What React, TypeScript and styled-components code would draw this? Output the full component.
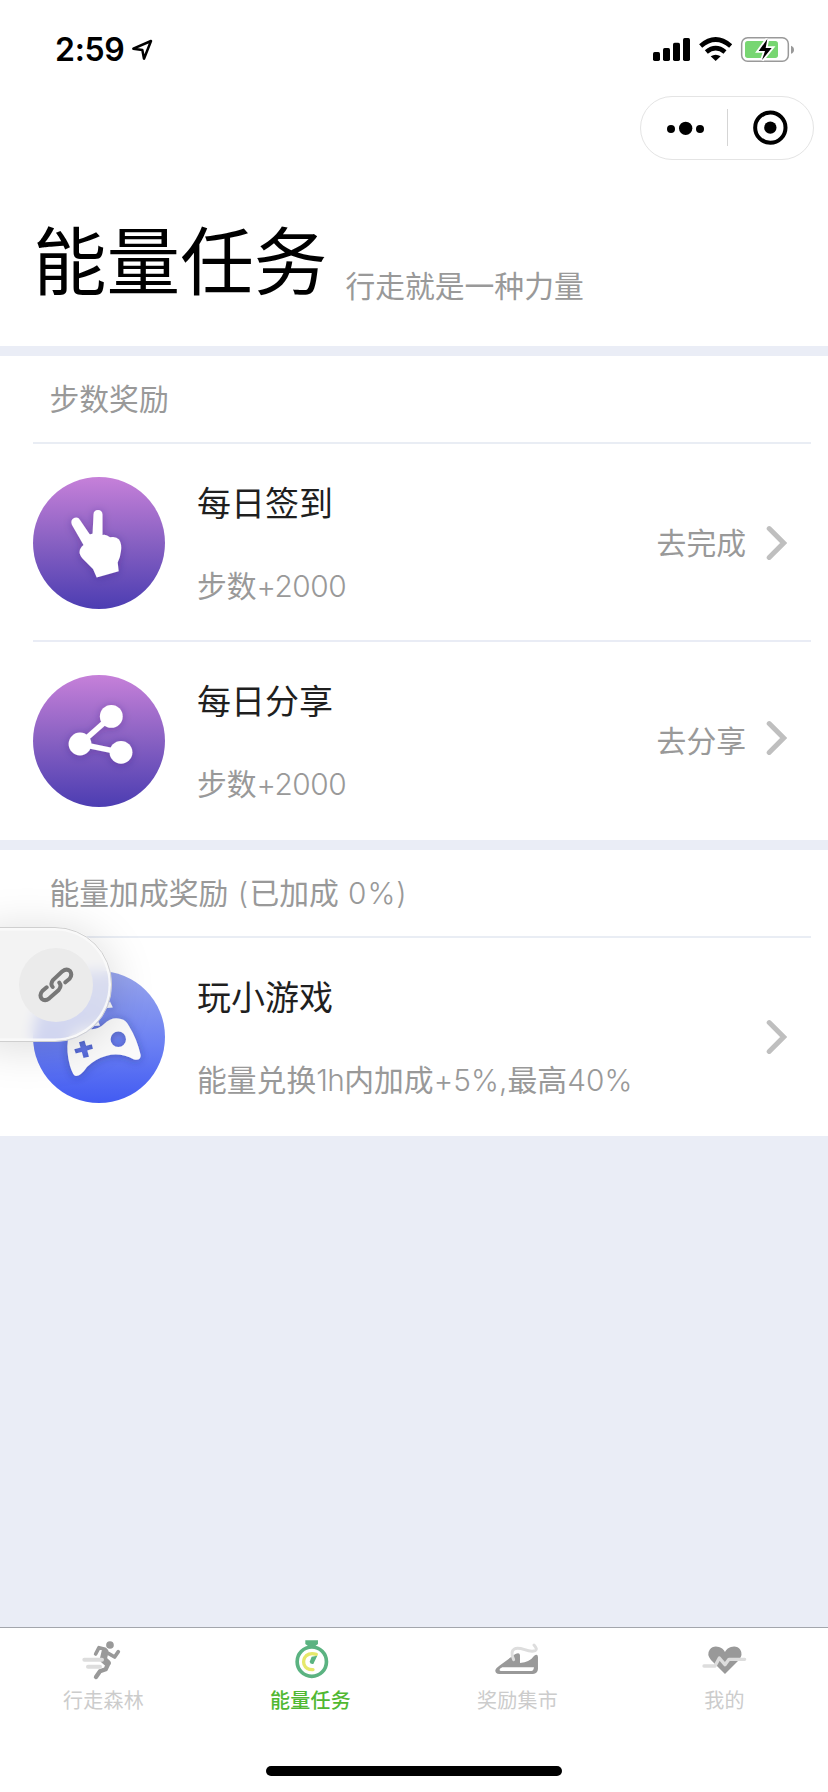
import React from "react";
import styled, { createGlobalStyle } from "styled-components";

const GlobalStyle = createGlobalStyle`
  * { box-sizing: border-box; }
  html, body { margin: 0; padding: 0; background: #eaedf6; }
  body {
    font-family: "Noto Sans CJK SC", sans-serif;
    font-weight: 400;
  }
  svg { display: block; flex: none; }
`;

const Screen = styled.div`
  position: relative;
  width: 828px;
  height: 1792px;
  display: flex;
  flex-direction: column;
  background: #eaedf6;
  overflow: hidden;
`;

const TopArea = styled.header`
  height: 346px;
  background: #fff;
  flex: none;
`;

const StatusBar = styled.div`
  height: 96px;
  padding: 0 33px 0 55px;
  display: flex;
  justify-content: space-between;
`;

const Clock = styled.div`
  display: flex;
  padding-top: 30px;
  gap: 6px;
  font: 600 32px/40px Inter, sans-serif;
  letter-spacing: -0.3px;
  color: #000;
`;

const CapsuleRow = styled.div`
  display: flex;
  justify-content: flex-end;
  padding-right: 14px;
`;

const Capsule = styled.div`
  width: 174px;
  height: 64px;
  border: 1px solid #e4e4e4;
  border-radius: 32px;
  display: flex;
`;

const Heading = styled.div`
  display: flex;
  align-items: flex-start;
  padding: 41px 33px 0 33px;
  gap: 18px;
`;

const Title = styled.h1`
  margin: 0;
  font-size: 73.6px;
  line-height: 112px;
  font-weight: 400;
  color: #000;
`;

const Slogan = styled.span`
  margin-top: 61px;
  font-size: 29.8px;
  line-height: 44px;
  color: #999;
`;

const Section = styled.section`
  margin-top: 10px;
  background: #fff;
  flex: none;
`;

const SectionHead = styled.div`
  margin-left: 33px;
  margin-right: 17px;
  padding-left: 16.5px;
  height: 88px;
  border-bottom: 2px solid #e9edf4;
  font-size: 29.8px;
  line-height: 82px;
  color: #999;
  white-space: pre;
`;

const Row = styled.div<{ $line?: boolean }>`
  margin-left: 33px;
  margin-right: 17px;
  height: 198px;
  padding: 33px 24px 0 0;
  display: flex;
  align-items: flex-start;
  border-bottom: ${(p) => (p.$line ? "2px solid #e9ecf5" : "none")};
`;

const Badge = styled.svg`
  width: 132px;
  height: 132px;
`;

const Info = styled.div`
  margin-left: 32px;
  flex: 1;
  display: flex;
  flex-direction: column;
  gap: 37px;
`;

const TaskName = styled.div`
  font-size: 34px;
  line-height: 50px;
  color: #1f1f1f;
`;

const TaskDesc = styled.div`
  font-size: 29.8px;
  line-height: 40px;
  color: #999;
  white-space: nowrap;
`;

const Latin = styled.span<{ $gap?: number }>`
  font-family: Inter, sans-serif;
  font-weight: 350;
  letter-spacing: ${(p) => p.$gap ?? -0.6}px;
`;

const Action = styled.div`
  height: 132px;
  display: flex;
  align-items: center;
  gap: 20px;
  font-size: 29.8px;
  color: #999;
`;

const ActionLabel = styled.span`
  line-height: 44px;
  padding-bottom: 5px;
`;

const Chevron = styled.svg<{ $lift?: number }>`
  width: 21px;
  height: 36px;
  margin-bottom: ${(p) => p.$lift ?? 0}px;
`;

const Floating = styled.div`
  position: absolute;
  left: -20px;
  top: 927px;
  width: 132px;
  height: 115px;
  border-radius: 0 57px 57px 0;
  border: 1px solid #cfcfcf;
  background: rgba(239, 239, 239, 0.76);
  backdrop-filter: blur(7px);
  box-shadow: 0 4px 46px rgba(0, 0, 0, 0.15), inset 0 0 0 2.5px rgba(250, 250, 250, 0.9);
  display: flex;
  align-items: center;
  padding-left: 38px;
`;

const FloatingDisc = styled.div`
  width: 74px;
  height: 74px;
  border-radius: 50%;
  background: #ebebeb;
  display: flex;
  align-items: center;
  justify-content: center;
`;

const TabBar = styled.nav`
  margin-top: auto;
  height: 165px;
  border-top: 1px solid #a3a6ac;
  background: #fff;
  display: flex;
  flex-direction: column;
  align-items: center;
`;

const Tabs = styled.div`
  display: flex;
  width: 100%;
  height: 138px;
`;

const Tab = styled.div<{ $active?: boolean }>`
  flex: 1;
  padding-top: 10px;
  display: flex;
  flex-direction: column;
  align-items: center;
  font-size: 20px;
  letter-spacing: 0.3px;
  line-height: 30px;
  font-weight: ${(p) => (p.$active ? 500 : 400)};
  color: ${(p) => (p.$active ? "#50b832" : "#ccc")};
`;

const TabIcon = styled.svg`
  width: 43.3px;
  height: 43.3px;
  margin-bottom: 4px;
`;

const HomeIndicator = styled.div`
  width: 296px;
  height: 10px;
  border-radius: 5px;
  background: #000;
`;

const StatusIcons = () => (
  <svg width="145" height="96" viewBox="150 0 435 288">
    <g fill="#000">
      <rect x="159" y="156" width="21" height="27" rx="5" />
      <rect x="189" y="144" width="21" height="39" rx="5" />
      <rect x="219" y="128" width="21" height="55" rx="5" />
      <rect x="249" y="114" width="21" height="69" rx="5" />
      <path d="M347 183 L332 169 Q347 159 362 169 Z" />
    </g>
    <g fill="none" stroke="#000" strokeWidth="14">
      <path d="M302 138 Q347 99 392 138" />
      <path d="M319 156 Q347 133 375 156" />
    </g>
    <rect x="425" y="113" width="140" height="71" rx="18" fill="#fff" stroke="#999" strokeWidth="4.5" />
    <rect x="435" y="123" width="99" height="51" rx="8" fill="#78d672" />
    <path d="M573 137 Q582 140 582 149 Q582 158 573 161 Z" fill="#999" />
    <path d="M502 117 L476 153 H495 L486 180 L515 144 H497 Z" fill="#000" stroke="#fff" strokeWidth="11" paintOrder="stroke" />
  </svg>
);

const PurpleGradient = ({ id }: { id: string }) => (
  <defs>
    <linearGradient id={id} x1="0" y1="0" x2="0" y2="1">
      <stop offset="0" stopColor="#c680d9" />
      <stop offset="0.5" stopColor="#8760c2" />
      <stop offset="1" stopColor="#4c3db2" />
    </linearGradient>
    <filter id={id + "Shadow"} x="-30%" y="-30%" width="160%" height="160%">
      <feDropShadow dx="0" dy="1" stdDeviation="4" floodColor="#30206a" floodOpacity="0.3" />
    </filter>
  </defs>
);

const SignInBadge = () => (
  <Badge viewBox="0 0 132 132">
    <PurpleGradient id="signIn" />
    <circle cx="66" cy="66" r="66" fill="url(#signIn)" />
    <g fill="#fff" filter="url(#signInShadow)">
      <path d="M60.5 37.5 Q60.7 33 65 33 Q69.2 33 69.5 37.5 V58 Q73 56.8 77 60.3 Q83 59 86 62.5 Q89 67 88 74 Q87.4 80 84.7 85.5 L85.7 94.3 L63.7 100.5 L60 92 L49.5 81.5 Q46 77 46.6 74.5 Q46.8 71 50.5 68 L39 48 Q37 43 41 41 Q45 39.5 47 43 L56.5 57 Q58 57.6 59.6 56.4 Z" />
    </g>
  </Badge>
);

const ShareBadge = () => (
  <Badge viewBox="0 0 132 132">
    <PurpleGradient id="share" />
    <circle cx="66" cy="66" r="66" fill="url(#share)" />
    <g fill="#fff" filter="url(#shareShadow)">
      <path d="M78.3 41.4 L47 69 L88 77.3" fill="none" stroke="#fff" strokeWidth="5.4" />
      <circle cx="78.3" cy="41.4" r="11.4" />
      <circle cx="47" cy="69" r="11.4" />
      <circle cx="88" cy="77.3" r="11.4" />
    </g>
  </Badge>
);

const GameBadge = () => (
  <Badge viewBox="0 0 132 132">
    <defs>
      <linearGradient id="game" x1="0" y1="0" x2="0" y2="1">
        <stop offset="0" stopColor="#99a6ed" />
        <stop offset="0.55" stopColor="#6b80f3" />
        <stop offset="1" stopColor="#425bf2" />
      </linearGradient>
      <filter id="gameShadow" x="-30%" y="-30%" width="160%" height="160%">
        <feDropShadow dx="0" dy="1" stdDeviation="4" floodColor="#203070" floodOpacity="0.4" />
      </filter>
    </defs>
    <circle cx="66" cy="66" r="66" fill="url(#game)" />
    <g filter="url(#gameShadow)">
      <path d="M72 35 L77 30.5 L79.8 36.5 L74 37 Z M59 53 L65 50 L67 54.5 L61 55 Z" fill="#fafafa" />
      <path
        d="M43 62 Q50 54 57 58 Q65 59 71 53 Q79 45 88 48 Q93 49 96 55 Q104 68 107.7 84 Q108 90 101 88.5 Q87 81 73 85 Q62 88 54 96 Q48 105 43 105 Q40 105 37 95 Q33 81 35 68 Q37 61 43 62 Z
           M45.9 71.2 L47.5 76.4 L41.2 78.2 L42.7 82.6 L48.8 80.9 L50.5 87.1 L56 85.7 L54.3 79.4 L60 77.8 L58.8 73.2 L53.1 74.8 L51.5 69.5 Z
           M93 68.3 A7.7 7.7 0 1 0 77.6 68.3 A7.7 7.7 0 1 0 93 68.3 Z"
        fill="#fafafa"
        fillRule="evenodd"
      />
    </g>
  </Badge>
);

const ChevronIcon = ({ lift }: { lift?: number }) => (
  <Chevron $lift={lift} viewBox="0 0 21 36">
    <path d="M3.2 3.6 L17.6 18 L3.2 32.4" fill="none" stroke="#bfbfbf" strokeWidth="5" strokeLinecap="round" strokeLinejoin="miter" />
  </Chevron>
);

const LinkIcon = () => (
  <svg width="36" height="36" viewBox="114 319 108 108" fill="none" stroke="#777" strokeWidth="12" strokeLinecap="round">
    <path d="M196 365 L209 354 Q218 342 210 331 Q200 322 187 332 L159 358 Q150 370 158 379" />
    <path d="M140 380 L127 391 Q117 402 125 414 Q135 423 148 413 L176 388 Q186 376 178 366" />
  </svg>
);

export default function App() {
  return (
    <Screen>
      <GlobalStyle />
      <TopArea>
        <StatusBar>
          <Clock>
            2:59
            <svg width="24" height="40" viewBox="390 90 72 120">
              <path d="M397 146 L450 123 L429 176 L424 150 Z" fill="none" stroke="#000" strokeWidth="7.5" strokeLinejoin="round" />
            </svg>
          </Clock>
          <StatusIcons />
        </StatusBar>
        <CapsuleRow>
          <Capsule>
            <svg width="172" height="62" viewBox="123 291 516 186">
              <circle cx="213" cy="387" r="12" />
              <circle cx="257" cy="385" r="20" />
              <circle cx="300" cy="387" r="12" />
              <rect x="381" y="327" width="3" height="111" fill="#d5d5d5" />
              <circle cx="511" cy="383" r="45.5" fill="none" stroke="#000" strokeWidth="12" />
              <circle cx="511" cy="383" r="18.5" />
            </svg>
          </Capsule>
        </CapsuleRow>
        <Heading>
          <Title>能量任务</Title>
          <Slogan>行走就是一种力量</Slogan>
        </Heading>
      </TopArea>

      <Section>
        <SectionHead>步数奖励</SectionHead>
        <Row $line>
          <SignInBadge />
          <Info>
            <TaskName>每日签到</TaskName>
            <TaskDesc>步数<Latin $gap={-0.5}>+2000</Latin></TaskDesc>
          </Info>
          <Action>
            <ActionLabel>去完成</ActionLabel>
            <ChevronIcon />
          </Action>
        </Row>
        <Row>
          <ShareBadge />
          <Info>
            <TaskName>每日分享</TaskName>
            <TaskDesc>步数<Latin $gap={-0.5}>+2000</Latin></TaskDesc>
          </Info>
          <Action>
            <ActionLabel>去分享</ActionLabel>
            <ChevronIcon lift={6} />
          </Action>
        </Row>
      </Section>

      <Section>
        <SectionHead>
          能量加成奖励<Latin $gap={1.2}> (</Latin>已加成<Latin $gap={0.9}> 0%)</Latin>
        </SectionHead>
        <Row>
          <GameBadge />
          <Info>
            <TaskName>玩小游戏</TaskName>
            <TaskDesc>
              能量兑换<Latin>1h</Latin>内加成<Latin $gap={0.1}>+5%,</Latin>最高<Latin $gap={0.1}>40%</Latin>
            </TaskDesc>
          </Info>
          <Action>
            <ChevronIcon />
          </Action>
        </Row>
      </Section>

      <Floating>
        <FloatingDisc>
          <LinkIcon />
        </FloatingDisc>
      </Floating>

      <TabBar>
        <Tabs>
          <Tab>
            <TabIcon viewBox="246 85 130 130">
              <g fill="none" stroke="#999" strokeLinecap="round" strokeLinejoin="round">
                <circle cx="330" cy="106" r="11.5" fill="#999" stroke="none" />
                <path d="M287 133 L297 114 L315 119 M325 131 L344 142 L355 126" strokeWidth="11" />
                <path d="M315 127 L310 149 L322 160" strokeWidth="21" />
                <path d="M323 166 L317 179 L300 185 L288 202" strokeWidth="13" />
              </g>
              <g stroke="#ddd" strokeWidth="12" strokeLinecap="round">
                <path d="M253 150 H306" />
                <path d="M264 171 H300" />
              </g>
            </TabIcon>
            行走森林
          </Tab>
          <Tab $active>
            <TabIcon viewBox="866 85 130 130">
              <path d="M915 92 H953 V103 L945 109 H923 L915 103 Z" fill="#5bb381" />
              <circle cx="934.5" cy="156" r="44" fill="none" stroke="#5bb381" strokeWidth="11" />
              <path d="M948 134 Q930 128 918 138 Q907 149 911 164 Q918 181 938 180" fill="none" stroke="#e6e86a" strokeWidth="10" strokeLinecap="round" />
              <path d="M951 138 L934 141 L928 156 Q930 165 939 163 Z" fill="#5bb381" />
            </TabIcon>
            能量任务
          </Tab>
          <Tab>
            <TabIcon viewBox="246 85 130 130" overflow="visible">
              <path d="M303 134 Q317 126 318 137 V160 Q348 157 360 139 Q371 130 372 142 V178 Q371 192 357 193 H256 Q243 192 244 181 Q247 174 256 168 Z" fill="#999" />
              <path d="M265 173 H360 Q359 184 352 184 H260 Q251 180 265 173 Z" fill="#fff" />
              <path d="M299 150 Q288 125 301 118 Q310 113 332 120 Q352 127 364 123 Q372 119 360 106" fill="none" stroke="#ddd" strokeWidth="9" strokeLinecap="round" />
            </TabIcon>
            奖励集市
          </Tab>
          <Tab>
            <TabIcon viewBox="866 85 130 130" overflow="visible">
              <path d="M932 193 L890 151 Q876 134 886 120 Q896 107 914 112 Q926 115 932 127 Q938 115 950 112 Q968 107 978 120 Q987 134 974 151 Z" fill="#999" />
              <path d="M869 169 H902 L915 145 L932 165 L944 149 H991" fill="none" stroke="#ddd" strokeWidth="10" strokeLinecap="round" strokeLinejoin="round" />
            </TabIcon>
            我的
          </Tab>
        </Tabs>
        <HomeIndicator />
      </TabBar>
    </Screen>
  );
}
